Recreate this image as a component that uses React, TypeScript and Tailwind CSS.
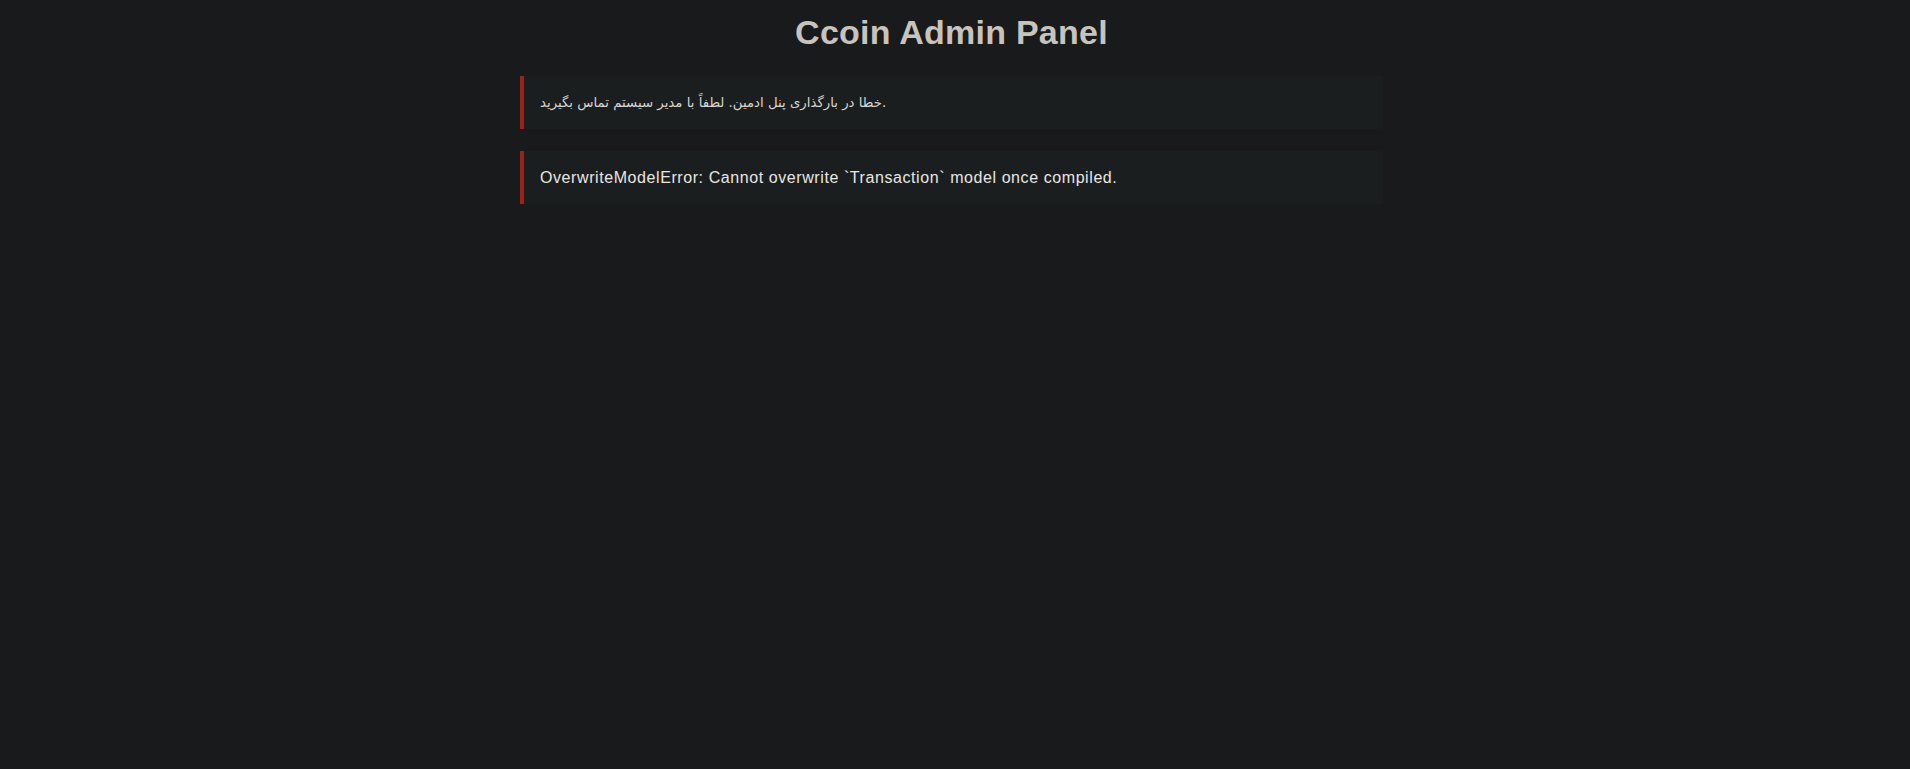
import React from "react";

const errors = [
  {
    text: "خطا در بارگذاری پنل ادمین. لطفاً با مدیر سیستم تماس بگیرید.",
    persian: true,
  },
  {
    text: "OverwriteModelError: Cannot overwrite `Transaction` model once compiled.",
    persian: false,
  },
];

const App = () => {
  return (
    <div className="min-h-screen w-full bg-[#181a1b] flex justify-center pr-[7px] font-['Liberation_Sans',Arial,'DejaVu_Sans',sans-serif]">
      <div className="w-[863px] pt-[13px] flex flex-col">
        {/* Titre */}
        <h1 className="text-center text-[34px] leading-[39px] tracking-[0.25px] font-bold text-[#c8c3bc]">
          Ccoin Admin Panel
        </h1>

        {/* Messages d'erreur */}
        <div className="mt-[24px] flex flex-col gap-[22px]">
          {errors.map((err, i) => (
            <div
              key={i}
              className="bg-[#1b1e1f] border-l-4 border-[#9c2318] py-4 pl-4 pr-4"
            >
              <p
                dir="ltr"
                className={
                  err.persian
                    ? "text-[13.3px] leading-[21px] text-[#d8d4cf] font-['DejaVu_Sans','Noto_Sans',sans-serif]"
                    : "text-base leading-[21px] tracking-[0.58px] text-[#e8e6e3]"
                }
              >
                {err.text}
              </p>
            </div>
          ))}
        </div>
      </div>
    </div>
  );
};

export default App;
